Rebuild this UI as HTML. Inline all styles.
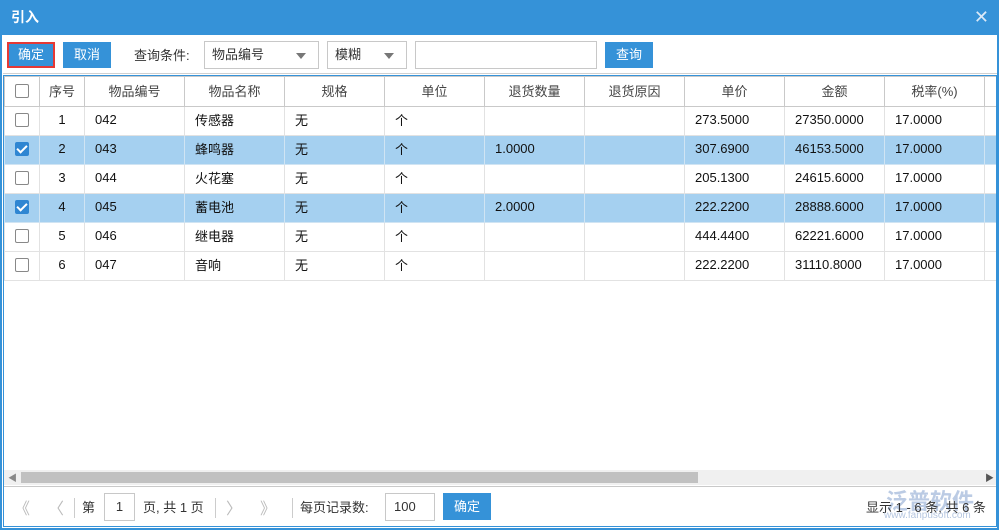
<!DOCTYPE html>
<html><head><meta charset="utf-8"><style>
*{box-sizing:border-box;margin:0;padding:0}
body{width:999px;height:530px;overflow:hidden;background:#fff;font-family:"Liberation Sans","Noto Sans CJK SC",sans-serif;font-size:13px;color:#333;position:relative}
.win{position:absolute;left:0;top:0;width:999px;height:530px;border:2px solid #3592d8;border-top:none}
.title{position:absolute;left:0;top:0;width:999px;height:35px;background:#3592d8;color:#fff;font-weight:bold;font-size:14px;line-height:34px;padding-left:11px}
.close{position:absolute;right:10px;top:0;color:#dbe9f7;font-size:18px;font-weight:normal;line-height:34px}
.btn{position:absolute;top:42px;height:26px;background:#3592d8;color:#fff;line-height:26px;text-align:center;font-size:13px}
.sel{position:absolute;top:41px;height:28px;border:1px solid #c8c8c8;line-height:26px;padding-left:7px;color:#333}
.arr:after{content:"";position:absolute;right:12px;top:11px;border:5px solid transparent;border-top:6px solid #777}
.grid{position:absolute;left:3px;top:75px;width:994px;height:452px;border:1px solid #3592d8;overflow:hidden}
table{border-collapse:collapse;table-layout:fixed;position:absolute;left:0;top:0;width:1010px}
td{height:29px;border:1px solid #e2e2e2;padding:0 0 3px 10px;white-space:nowrap;overflow:hidden;font-size:13px;color:#111}
th{height:30px;border:1px solid #c9c9c9;font-weight:normal;color:#444;background:#fff;font-size:13px;padding-bottom:2px}
tr.s td{background:#a5d0f0;border-color:#d0e4f3}
td.c{text-align:center;padding:0 0 3px 0}
.cb{display:inline-block;width:14px;height:14px;border:1px solid #888;border-radius:2px;vertical-align:middle;background:#fff}
.ck{background:#2f86d2;border-color:#2f86d2;position:relative}
.ck:after{content:"";position:absolute;left:3px;top:0px;width:4px;height:8px;border:solid #fff;border-width:0 2px 2px 0;transform:rotate(45deg)}
.sb{position:absolute;left:0;top:394px;width:992px;height:15px;background:#f0f0f0}
.thumb{position:absolute;left:17px;top:2px;width:677px;height:11px;background:#c1c1c1}
.pager{position:absolute;left:0;top:410px;width:992px;height:41px;border-top:1px solid #c9c9c9}
.p{position:absolute;top:10px;font-size:13px;color:#333}
.g{color:#bbb;font-size:16px}
.sep{position:absolute;top:11px;width:1px;height:20px;background:#ccc}
.inp{position:absolute;border:1px solid #c8c8c8;height:28px;top:6px;line-height:26px}
</style></head><body>
<div class="win"></div>
<div class="title">引入<span class="close">✕</span></div>
<div class="btn" style="left:7px;width:48px;border:2px solid #e53935;line-height:22px">确定</div>
<div class="btn" style="left:63px;width:48px">取消</div>
<div style="position:absolute;left:134px;top:45px;color:#333">查询条件:</div>
<div class="sel arr" style="left:204px;width:115px">物品编号</div>
<div class="sel arr" style="left:327px;width:80px">模糊</div>
<div class="sel" style="left:415px;width:182px;padding:0"></div>
<div class="btn" style="left:605px;width:48px">查询</div>
<div style="position:absolute;left:3px;top:73px;width:994px;height:1px;background:#d0d0d0"></div>
<div class="grid">
<table>
<colgroup><col style="width:35px"><col style="width:45px"><col style="width:100px"><col style="width:100px"><col style="width:100px"><col style="width:100px"><col style="width:100px"><col style="width:100px"><col style="width:100px"><col style="width:100px"><col style="width:100px"><col style="width:30px"></colgroup>
<tr><th><span class="cb"></span></th><th>序号</th><th>物品编号</th><th>物品名称</th><th>规格</th><th>单位</th><th>退货数量</th><th>退货原因</th><th>单价</th><th>金额</th><th>税率(%)</th><th></th></tr>
<tr><td class="c"><span class="cb"></span></td><td class="c">1</td><td>042</td><td>传感器</td><td>无</td><td>个</td><td></td><td></td><td>273.5000</td><td>27350.0000</td><td>17.0000</td><td></td></tr>
<tr class="s"><td class="c"><span class="cb ck"></span></td><td class="c">2</td><td>043</td><td>蜂鸣器</td><td>无</td><td>个</td><td>1.0000</td><td></td><td>307.6900</td><td>46153.5000</td><td>17.0000</td><td></td></tr>
<tr><td class="c"><span class="cb"></span></td><td class="c">3</td><td>044</td><td>火花塞</td><td>无</td><td>个</td><td></td><td></td><td>205.1300</td><td>24615.6000</td><td>17.0000</td><td></td></tr>
<tr class="s"><td class="c"><span class="cb ck"></span></td><td class="c">4</td><td>045</td><td>蓄电池</td><td>无</td><td>个</td><td>2.0000</td><td></td><td>222.2200</td><td>28888.6000</td><td>17.0000</td><td></td></tr>
<tr><td class="c"><span class="cb"></span></td><td class="c">5</td><td>046</td><td>继电器</td><td>无</td><td>个</td><td></td><td></td><td>444.4400</td><td>62221.6000</td><td>17.0000</td><td></td></tr>
<tr><td class="c"><span class="cb"></span></td><td class="c">6</td><td>047</td><td>音响</td><td>无</td><td>个</td><td></td><td></td><td>222.2200</td><td>31110.8000</td><td>17.0000</td><td></td></tr>
</table>
<div class="sb"><span style="position:absolute;left:4px;top:1px;font-size:9px;color:#888">◀</span><div class="thumb"></div><span style="position:absolute;right:2px;top:1px;font-size:9px;color:#555">▶</span></div>
<div class="pager">
<span class="p g" style="left:10px;top:8px">《</span>
<span class="p g" style="left:44px;top:8px">〈</span>
<div class="sep" style="left:70px"></div>
<span class="p" style="left:78px">第</span>
<div class="inp" style="left:100px;width:31px;text-align:center">1</div>
<span class="p" style="left:139px">页, 共 1 页</span>
<div class="sep" style="left:211px"></div>
<span class="p g" style="left:222px;top:8px">〉</span>
<span class="p g" style="left:256px;top:8px">》</span>
<div class="sep" style="left:288px"></div>
<span class="p" style="left:296px">每页记录数:</span>
<div class="inp" style="left:381px;width:50px;padding-left:8px">100</div>
<div class="btn" style="left:439px;top:6px;width:48px;height:27px;line-height:27px">确定</div>
<span style="position:absolute;left:882px;top:-3px;font-size:22px;color:#9fb6da;font-weight:bold;opacity:.7">泛普软件</span>
<span class="p" style="left:862px;top:10px">显示 1 - 6 条, 共 6 条</span>
<span style="position:absolute;left:880px;top:23px;font-size:10px;color:#b5c6e0">www.fanpusoft.com</span>
</div>
</div>
</body></html>
